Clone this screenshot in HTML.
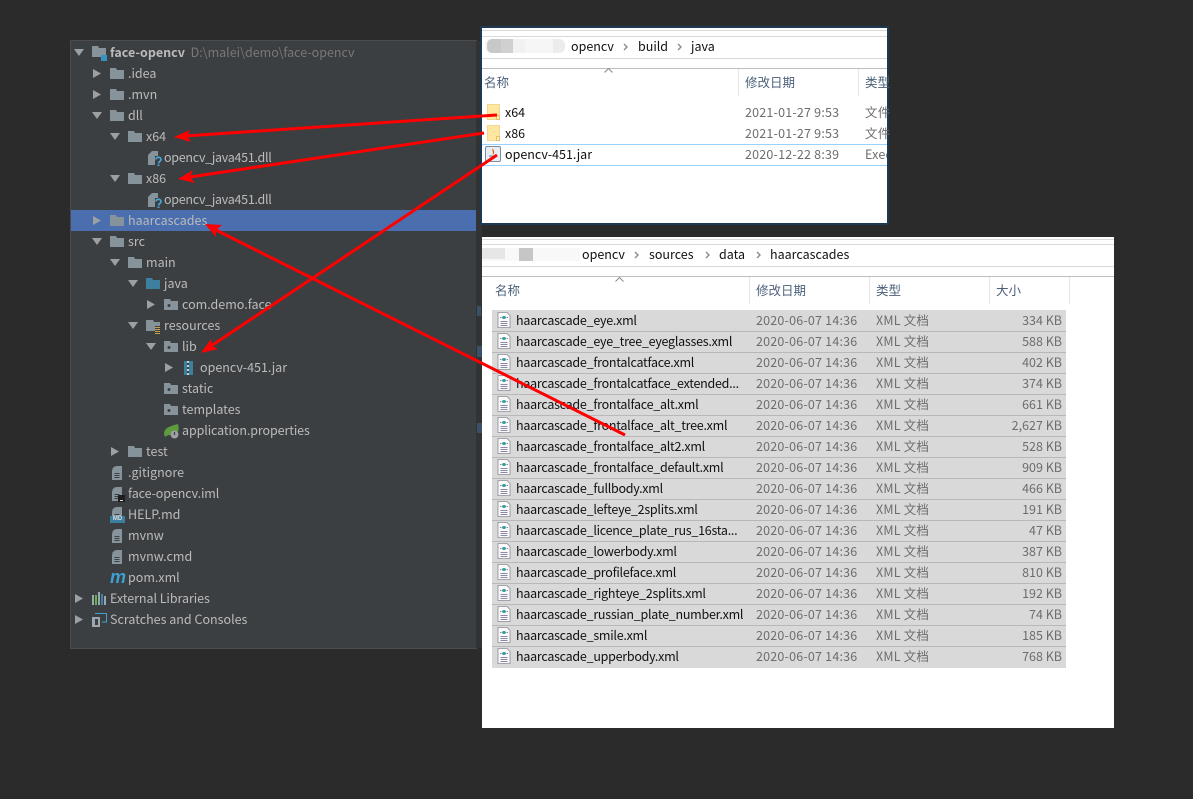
<!DOCTYPE html>
<html><head><meta charset="utf-8"><style>
html,body{margin:0;padding:0;background:#2b2b2b}
#p{position:relative;width:1193px;height:799px;overflow:hidden;background:#2b2b2b;font-family:"Noto Sans CJK SC","Liberation Sans",sans-serif}
#p div,#p svg.i{position:absolute}
.r,.e,.g,.h{margin-top:-1px}
.r{line-height:19px;height:21px;font-size:12.5px;color:#bbbbbb;white-space:nowrap}
.u{letter-spacing:-.28px}
.e{line-height:19px;height:21px;font-size:12.5px;color:#111;white-space:nowrap}
.n{letter-spacing:-.26px}
.g{line-height:19px;height:21px;font-size:12.5px;color:#6d6d6d;white-space:nowrap;letter-spacing:.2px}
.g[style*="right"]{letter-spacing:0}
.h{line-height:19px;height:21px;font-size:12.5px;color:#4c607a;white-space:nowrap}
.v{width:1px;background:#e5e5e5}
.l{height:1px;background:#d9d9d9}
.row{left:492px;width:574px;height:20px;background:#d9d9d9;border-top:1px solid #b8b8b8}
</style></head><body><div id="p">
<svg width="0" height="0" style="position:absolute">
<defs>
<symbol id="f" viewBox="0 0 14 11"><path d="M0 0H6L7 2H14V11H0Z" fill="#87939a"/></symbol>
<symbol id="b" viewBox="0 0 14 11"><path d="M0 0H6L7 2H14V11H0Z" fill="#3d7f9f"/></symbol>
<symbol id="k" viewBox="0 0 14 11"><path d="M0 0H6L7 2H14V11H0Z" fill="#87939a"/><circle cx="5" cy="6.500" r="1.500" fill="#3c3f41"/></symbol>
<symbol id="R" viewBox="0 0 14 14"><path d="M0 0H7L8 2H14V11H0Z" fill="#87939a"/><path d="M9 6H15V14H9Z" fill="#3c3f41"/><path d="M9 7h5v1H9zM9 9h5v1H9zM9 11h5v1H9zM9 13h5v1H9z" fill="#c9a24e"/></symbol>
<symbol id="d" viewBox="0 0 10 14"><path d="M4 0H10V14H0V4Z" fill="#87939a"/><path d="M3 0V3H0Z" fill="#87939a"/><path d="M2.500 7h5v1h-5zM2.500 9h5v1h-5zM2.500 11h5v1h-5z" fill="#3c3f41"/></symbol>
<symbol id="q" viewBox="0 0 14 15"><path d="M4 0H10V14H0V4Z" fill="#87939a"/><path d="M7 5H14V15H7Z" fill="#3c3f41"/><path d="M8 8.500C8 5.500 13 5.500 13 8.500C13 10.500 10.500 10.500 10.500 12.500" fill="none" stroke="#46a8d8" stroke-width="1.700"/><rect x="9.500" y="13.500" width="2" height="1.500" fill="#46a8d8"/></symbol>
<symbol id="x" viewBox="0 0 14 16"><path d="M1 .5H10L13 3.500V15.500H1Z" fill="#fafafa" stroke="#8c8c96" stroke-width=".8"/><path d="M3.500 9.500h7M3.500 11.500h7M3.500 13.500h7" stroke="#8a8aa8" stroke-width=".9"/><ellipse cx="7" cy="5.500" rx="1.900" ry="1.500" fill="#2f9a9f"/><path d="M4.300 5.500L3.200 5.500M9.700 5.500L10.800 5.500" stroke="#666" stroke-width=".9"/></symbol>
<symbol id="y" viewBox="0 0 13 16"><path d="M.5 .5H12.500V15.500H.5Z" fill="#ffe79f" stroke="#edcf7e" stroke-width=".8"/><path d="M9.500 11.500H12.500V15.500H9.500Z" fill="#ffeeb5" stroke="#dcb95a" stroke-width=".8"/></symbol>
<symbol id="c" viewBox="0 0 5 8"><path d="M1 1L4 4L1 7" fill="none" stroke="#8a8a8a" stroke-width="1.400"/></symbol>
</defs></svg>

<!-- IDE panel -->
<div style="left:70px;top:40px;width:407px;height:609px;background:#4a4c4e"></div>
<div style="left:71px;top:41px;width:405px;height:607px;background:#3c3f41"></div>
<div style="left:476px;top:41px;width:6px;height:607px;background:#313335"></div>
<div style="left:477px;top:306px;width:4px;height:10px;background:#3a5068"></div>
<div style="left:477px;top:346px;width:5px;height:11px;background:#3a5068"></div>
<div style="left:477px;top:423px;width:5px;height:10px;background:#3a5068"></div>
<div style="left:71px;top:210px;width:405px;height:21px;background:#4b6eaf"></div>

<!-- triangles -->
<svg style="position:absolute;left:0;top:0" width="480" height="650"><g fill="#9da0a2">
<path d="M74 49H84L79 56Z"/><path d="M93 69V78L101 73.500Z"/><path d="M93 90V99L101 94.500Z"/>
<path d="M92 112H102L97 119Z"/><path d="M110 133H120L115 140Z"/><path d="M110 175H120L115 182Z"/>
<path d="M93 216V225L101 220.500Z"/><path d="M92 238H102L97 245Z"/><path d="M110 259H120L115 266Z"/>
<path d="M128 280H138L133 287Z"/><path d="M147 300V309L155 304.500Z"/><path d="M128 322H138L133 329Z"/>
<path d="M146 343H156L151 350Z"/><path d="M165 363V372L173 367.500Z"/><path d="M111 447V456L119 451.500Z"/>
<path d="M75 594V603L83 598.500Z"/><path d="M75 615V624L83 619.500Z"/></g></svg>

<!-- tree icons -->
<svg class="i" style="left:92px;top:46px" width="14" height="11"><use href="#f"/></svg>
<div style="left:101px;top:55px;width:6px;height:6px;background:#3592c4"></div>
<svg class="i" style="left:110px;top:68px" width="14" height="11"><use href="#f"/></svg>
<svg class="i" style="left:110px;top:89px" width="14" height="11"><use href="#f"/></svg>
<svg class="i" style="left:110px;top:110px" width="14" height="11"><use href="#f"/></svg>
<svg class="i" style="left:128px;top:131px" width="14" height="11"><use href="#f"/></svg>
<svg class="i" style="left:148px;top:151px" width="14" height="15"><use href="#q"/></svg>
<svg class="i" style="left:128px;top:173px" width="14" height="11"><use href="#f"/></svg>
<svg class="i" style="left:148px;top:193px" width="14" height="15"><use href="#q"/></svg>
<svg class="i" style="left:110px;top:215px" width="14" height="11"><use href="#f"/></svg>
<svg class="i" style="left:110px;top:236px" width="14" height="11"><use href="#f"/></svg>
<svg class="i" style="left:128px;top:257px" width="14" height="11"><use href="#f"/></svg>
<svg class="i" style="left:146px;top:278px" width="14" height="11"><use href="#b"/></svg>
<svg class="i" style="left:164px;top:299px" width="14" height="11"><use href="#k"/></svg>
<svg class="i" style="left:146px;top:320px" width="14" height="14"><use href="#R"/></svg>
<svg class="i" style="left:164px;top:341px" width="14" height="11"><use href="#k"/></svg>
<div style="left:184px;top:361px;width:3px;height:14px;background:#3d7f9f"></div>
<div style="left:187px;top:361px;width:2px;height:14px;background:repeating-linear-gradient(#ccc 0 2px,#3c3f41 2px 4px)"></div>
<div style="left:189px;top:361px;width:4px;height:14px;background:#3d7f9f"></div>
<svg class="i" style="left:164px;top:383px" width="14" height="11"><use href="#k"/></svg>
<svg class="i" style="left:164px;top:404px" width="14" height="11"><use href="#k"/></svg>
<svg class="i" style="left:164px;top:424px" width="16" height="15" viewBox="0 0 16 15"><path d="M0 10C0 4 6 2 14 0C15 4 15 7 13 9C9 10 3 11 1 13Z" fill="#5d9b3f"/><circle cx="10.500" cy="10.500" r="4" fill="#9da0a2"/><path d="M10.500 8V11" stroke="#3c3f41" stroke-width="1.200"/></svg>
<svg class="i" style="left:128px;top:446px" width="14" height="11"><use href="#f"/></svg>
<svg class="i" style="left:112px;top:466px" width="10" height="14"><use href="#d"/></svg>
<svg class="i" style="left:112px;top:487px" width="10" height="14"><use href="#d"/></svg>
<div style="left:118px;top:495px;width:7px;height:7px;background:#1e1e1e"></div>
<div style="left:120px;top:500px;width:3px;height:1px;background:#ddd"></div>
<svg class="i" style="left:112px;top:507px" width="10" height="14"><use href="#d"/></svg>
<div style="left:110px;top:516px;width:15px;height:7px;background:#3d7f9f;color:#ddd;font:bold 6px/7px 'Liberation Sans',sans-serif;text-align:center">MD</div>
<svg class="i" style="left:112px;top:529px" width="10" height="14"><use href="#d"/></svg>
<svg class="i" style="left:112px;top:550px" width="10" height="14"><use href="#d"/></svg>
<div style="left:110px;top:568px;color:#3d9fd0;font:italic bold 18px/18px 'Liberation Sans',sans-serif">m</div>
<svg class="i" style="left:92px;top:592px" width="14" height="13" viewBox="0 0 14 13"><path d="M0 3h2v10H0z" fill="#9aa7b0"/><path d="M3 3h2v10H3z" fill="#62b543"/><path d="M6 0h2v13H6z" fill="#9aa7b0"/><path d="M9 2h2v11H9z" fill="#40a0d0" opacity=".7"/><path d="M12 4h2v9h-2z" fill="#9aa7b0"/></svg>
<svg class="i" style="left:92px;top:613px" width="15" height="14" viewBox="0 0 15 14"><path d="M3 .5H14.500V9H10" fill="none" stroke="#40a0d0"/><path d="M0 4H8V14H0Z" fill="#9aa7b0"/><path d="M3 6h3v6H3z" fill="#3c3f41"/></svg>

<!-- tree text -->
<div class="r" style="left:110px;top:43px"><b style="color:#bbb">face-opencv</b> <span style="color:#787878">&nbsp;D:\malei\demo\face-opencv</span></div>
<div class="r" style="left:128px;top:64px">.idea</div>
<div class="r" style="left:128px;top:85px">.mvn</div>
<div class="r" style="left:128px;top:106px">dll</div>
<div class="r" style="left:146px;top:127px">x64</div>
<div class="r u" style="left:164px;top:148px">opencv_java451.dll</div>
<div class="r" style="left:146px;top:169px">x86</div>
<div class="r u" style="left:164px;top:190px">opencv_java451.dll</div>
<div class="r" style="left:128px;top:211px">haarcascades</div>
<div class="r" style="left:128px;top:232px">src</div>
<div class="r" style="left:146px;top:253px">main</div>
<div class="r" style="left:164px;top:274px">java</div>
<div class="r" style="left:182px;top:295px">com.demo.face</div>
<div class="r" style="left:164px;top:316px">resources</div>
<div class="r" style="left:182px;top:337px">lib</div>
<div class="r" style="left:200px;top:358px">opencv-451.jar</div>
<div class="r" style="left:182px;top:379px">static</div>
<div class="r" style="left:182px;top:400px">templates</div>
<div class="r" style="left:182px;top:421px;letter-spacing:-.1px">application.properties</div>
<div class="r" style="left:146px;top:442px">test</div>
<div class="r" style="left:128px;top:463px">.gitignore</div>
<div class="r" style="left:128px;top:484px;letter-spacing:-.1px">face-opencv.iml</div>
<div class="r" style="left:128px;top:505px">HELP.md</div>
<div class="r" style="left:128px;top:526px">mvnw</div>
<div class="r" style="left:128px;top:547px">mvnw.cmd</div>
<div class="r" style="left:128px;top:568px">pom.xml</div>
<div class="r" style="left:110px;top:589px;letter-spacing:-.05px">External Libraries</div>
<div class="r" style="left:110px;top:610px">Scratches and Consoles</div>

<!-- window 1 -->
<div style="left:480px;top:26px;width:409px;height:199px;background:#1d3a52"></div>
<div style="left:482px;top:28px;width:405px;height:195px;background:#fff"></div>
<div class="l" style="left:482px;top:30px;width:405px"></div>
<div class="l" style="left:482px;top:36px;width:405px"></div>
<div class="l" style="left:482px;top:58px;width:405px"></div>
<div style="left:482px;top:68px;width:405px;height:1px;background:#bdbdbd"></div>
<div style="left:485px;top:39px;width:80px;height:14px;background:#f6f6f6;border-radius:6px"></div>
<div style="left:487px;top:39px;width:14px;height:14px;background:#c8c8c8;border-radius:5px 0 0 5px"></div>
<div style="left:501px;top:39px;width:12px;height:14px;background:#d0d0d0"></div>
<div style="left:513px;top:39px;width:12px;height:14px;background:#f1f1f1"></div>
<div style="left:553px;top:39px;width:12px;height:14px;background:#ececec;border-radius:0 6px 6px 0"></div>
<div class="e" style="left:571px;top:37px">opencv</div>
<svg class="i" style="left:623px;top:43px" width="5" height="8"><use href="#c"/></svg>
<div class="e" style="left:638px;top:37px">build</div>
<svg class="i" style="left:677px;top:43px" width="5" height="8"><use href="#c"/></svg>
<div class="e" style="left:691px;top:37px">java</div>
<svg class="i" style="left:604px;top:68px" width="9" height="5"><path d="M.5 4.500L4.500 .5L8.500 4.500" fill="none" stroke="#8a8a8a"/></svg>
<div class="h" style="left:484px;top:73px">名称</div>
<div class="h" style="left:745px;top:73px">修改日期</div>
<div class="h" style="left:865px;top:73px">类型</div>
<div class="v" style="left:738px;top:69px;height:27px"></div>
<div class="v" style="left:858px;top:69px;height:27px"></div>
<svg class="i" style="left:487px;top:104px" width="13" height="16"><use href="#y"/></svg>
<svg class="i" style="left:487px;top:125px" width="13" height="16"><use href="#y"/></svg>
<div style="left:482px;top:144px;width:405px;height:20px;border-top:1px solid #99d1ff;border-bottom:1px solid #99d1ff"></div>
<svg class="i" style="left:485px;top:146px" width="16" height="16" viewBox="0 0 16 16"><rect x=".5" y=".5" width="15" height="15" rx="1.500" fill="#e9edf2" stroke="#7d8ca0"/><path d="M8 3C7 5 10 5 8 8" stroke="#d9631e" fill="none" stroke-width="1.200"/><path d="M4 10H11M5 12H10" stroke="#5382a1"/></svg>
<div class="e" style="left:505px;top:103px">x64</div>
<div class="e" style="left:505px;top:124px">x86</div>
<div class="e" style="left:505px;top:145px">opencv-451.jar</div>
<div class="g" style="left:745px;top:103px">2021-01-27 9:53</div>
<div class="g" style="left:745px;top:124px">2021-01-27 9:53</div>
<div class="g" style="left:745px;top:145px">2020-12-22 8:39</div>
<div class="g" style="left:865px;top:103px">文件</div>
<div class="g" style="left:865px;top:124px">文件</div>
<div class="g" style="left:865px;top:145px;width:22px;overflow:hidden">Executable</div>

<!-- window 2 -->
<div style="left:482px;top:237px;width:632px;height:491px;background:#fff"></div>
<div class="l" style="left:482px;top:239px;width:632px"></div>
<div class="l" style="left:482px;top:244px;width:632px"></div>
<div class="l" style="left:482px;top:266px;width:632px"></div>
<div style="left:482px;top:276px;width:632px;height:1px;background:#bdbdbd"></div>
<div style="left:482px;top:248px;width:98px;height:13px;background:#f8f8f8"></div>
<div style="left:482px;top:248px;width:23px;height:11px;background:#e6e6e6"></div>
<div style="left:519px;top:248px;width:14px;height:13px;background:#c6c6c6"></div>
<div class="e" style="left:582px;top:245px">opencv</div>
<svg class="i" style="left:634px;top:251px" width="5" height="8"><use href="#c"/></svg>
<div class="e" style="left:649px;top:245px">sources</div>
<svg class="i" style="left:705px;top:251px" width="5" height="8"><use href="#c"/></svg>
<div class="e" style="left:719px;top:245px">data</div>
<svg class="i" style="left:756px;top:251px" width="5" height="8"><use href="#c"/></svg>
<div class="e" style="left:770px;top:245px">haarcascades</div>
<svg class="i" style="left:615px;top:277px" width="9" height="5"><path d="M.5 4.500L4.500 .5L8.500 4.500" fill="none" stroke="#8a8a8a"/></svg>
<div class="h" style="left:495px;top:281px">名称</div>
<div class="h" style="left:756px;top:281px">修改日期</div>
<div class="h" style="left:876px;top:281px">类型</div>
<div class="h" style="left:996px;top:281px">大小</div>
<div class="v" style="left:749px;top:277px;height:27px"></div>
<div class="v" style="left:869px;top:277px;height:27px"></div>
<div class="v" style="left:989px;top:277px;height:27px"></div>
<div class="v" style="left:1069px;top:277px;height:27px"></div>

<div class="row" style="top:310px;border-top-color:#d9d9d9"></div><div class="row" style="top:331px"></div><div class="row" style="top:352px"></div><div class="row" style="top:373px"></div><div class="row" style="top:394px"></div><div class="row" style="top:415px"></div><div class="row" style="top:436px"></div><div class="row" style="top:457px"></div><div class="row" style="top:478px"></div><div class="row" style="top:499px"></div><div class="row" style="top:520px"></div><div class="row" style="top:541px"></div><div class="row" style="top:562px"></div><div class="row" style="top:583px"></div><div class="row" style="top:604px"></div><div class="row" style="top:625px"></div><div class="row" style="top:646px;height:21px"></div>

<svg class="i" style="left:497px;top:312px" width="14" height="16"><use href="#x"/></svg><svg class="i" style="left:497px;top:333px" width="14" height="16"><use href="#x"/></svg><svg class="i" style="left:497px;top:354px" width="14" height="16"><use href="#x"/></svg><svg class="i" style="left:497px;top:375px" width="14" height="16"><use href="#x"/></svg><svg class="i" style="left:497px;top:396px" width="14" height="16"><use href="#x"/></svg><svg class="i" style="left:497px;top:417px" width="14" height="16"><use href="#x"/></svg><svg class="i" style="left:497px;top:438px" width="14" height="16"><use href="#x"/></svg><svg class="i" style="left:497px;top:459px" width="14" height="16"><use href="#x"/></svg><svg class="i" style="left:497px;top:480px" width="14" height="16"><use href="#x"/></svg><svg class="i" style="left:497px;top:501px" width="14" height="16"><use href="#x"/></svg><svg class="i" style="left:497px;top:522px" width="14" height="16"><use href="#x"/></svg><svg class="i" style="left:497px;top:543px" width="14" height="16"><use href="#x"/></svg><svg class="i" style="left:497px;top:564px" width="14" height="16"><use href="#x"/></svg><svg class="i" style="left:497px;top:585px" width="14" height="16"><use href="#x"/></svg><svg class="i" style="left:497px;top:606px" width="14" height="16"><use href="#x"/></svg><svg class="i" style="left:497px;top:627px" width="14" height="16"><use href="#x"/></svg><svg class="i" style="left:497px;top:648px" width="14" height="16"><use href="#x"/></svg>

<div class="e n" style="left:516px;top:311px">haarcascade_eye.xml</div>
<div class="e n" style="left:516px;top:332px">haarcascade_eye_tree_eyeglasses.xml</div>
<div class="e n" style="left:516px;top:353px">haarcascade_frontalcatface.xml</div>
<div class="e n" style="left:516px;top:374px">haarcascade_frontalcatface_extended...</div>
<div class="e n" style="left:516px;top:395px">haarcascade_frontalface_alt.xml</div>
<div class="e n" style="left:516px;top:416px">haarcascade_frontalface_alt_tree.xml</div>
<div class="e n" style="left:516px;top:437px">haarcascade_frontalface_alt2.xml</div>
<div class="e n" style="left:516px;top:458px">haarcascade_frontalface_default.xml</div>
<div class="e n" style="left:516px;top:479px">haarcascade_fullbody.xml</div>
<div class="e n" style="left:516px;top:500px">haarcascade_lefteye_2splits.xml</div>
<div class="e n" style="left:516px;top:521px">haarcascade_licence_plate_rus_16sta...</div>
<div class="e n" style="left:516px;top:542px">haarcascade_lowerbody.xml</div>
<div class="e n" style="left:516px;top:563px">haarcascade_profileface.xml</div>
<div class="e n" style="left:516px;top:584px">haarcascade_righteye_2splits.xml</div>
<div class="e n" style="left:516px;top:605px">haarcascade_russian_plate_number.xml</div>
<div class="e n" style="left:516px;top:626px">haarcascade_smile.xml</div>
<div class="e n" style="left:516px;top:647px">haarcascade_upperbody.xml</div>

<div class="g" style="left:756px;top:311px">2020-06-07 14:36</div><div class="g" style="left:876px;top:311px">XML 文档</div><div class="g" style="right:131px;top:311px">334 KB</div>
<div class="g" style="left:756px;top:332px">2020-06-07 14:36</div><div class="g" style="left:876px;top:332px">XML 文档</div><div class="g" style="right:131px;top:332px">588 KB</div>
<div class="g" style="left:756px;top:353px">2020-06-07 14:36</div><div class="g" style="left:876px;top:353px">XML 文档</div><div class="g" style="right:131px;top:353px">402 KB</div>
<div class="g" style="left:756px;top:374px">2020-06-07 14:36</div><div class="g" style="left:876px;top:374px">XML 文档</div><div class="g" style="right:131px;top:374px">374 KB</div>
<div class="g" style="left:756px;top:395px">2020-06-07 14:36</div><div class="g" style="left:876px;top:395px">XML 文档</div><div class="g" style="right:131px;top:395px">661 KB</div>
<div class="g" style="left:756px;top:416px">2020-06-07 14:36</div><div class="g" style="left:876px;top:416px">XML 文档</div><div class="g" style="right:131px;top:416px">2,627 KB</div>
<div class="g" style="left:756px;top:437px">2020-06-07 14:36</div><div class="g" style="left:876px;top:437px">XML 文档</div><div class="g" style="right:131px;top:437px">528 KB</div>
<div class="g" style="left:756px;top:458px">2020-06-07 14:36</div><div class="g" style="left:876px;top:458px">XML 文档</div><div class="g" style="right:131px;top:458px">909 KB</div>
<div class="g" style="left:756px;top:479px">2020-06-07 14:36</div><div class="g" style="left:876px;top:479px">XML 文档</div><div class="g" style="right:131px;top:479px">466 KB</div>
<div class="g" style="left:756px;top:500px">2020-06-07 14:36</div><div class="g" style="left:876px;top:500px">XML 文档</div><div class="g" style="right:131px;top:500px">191 KB</div>
<div class="g" style="left:756px;top:521px">2020-06-07 14:36</div><div class="g" style="left:876px;top:521px">XML 文档</div><div class="g" style="right:131px;top:521px">47 KB</div>
<div class="g" style="left:756px;top:542px">2020-06-07 14:36</div><div class="g" style="left:876px;top:542px">XML 文档</div><div class="g" style="right:131px;top:542px">387 KB</div>
<div class="g" style="left:756px;top:563px">2020-06-07 14:36</div><div class="g" style="left:876px;top:563px">XML 文档</div><div class="g" style="right:131px;top:563px">810 KB</div>
<div class="g" style="left:756px;top:584px">2020-06-07 14:36</div><div class="g" style="left:876px;top:584px">XML 文档</div><div class="g" style="right:131px;top:584px">192 KB</div>
<div class="g" style="left:756px;top:605px">2020-06-07 14:36</div><div class="g" style="left:876px;top:605px">XML 文档</div><div class="g" style="right:131px;top:605px">74 KB</div>
<div class="g" style="left:756px;top:626px">2020-06-07 14:36</div><div class="g" style="left:876px;top:626px">XML 文档</div><div class="g" style="right:131px;top:626px">185 KB</div>
<div class="g" style="left:756px;top:647px">2020-06-07 14:36</div><div class="g" style="left:876px;top:647px">XML 文档</div><div class="g" style="right:131px;top:647px">768 KB</div>

<!-- arrows -->
<svg style="position:absolute;left:0;top:0" width="1193" height="799">
<g stroke="#ff0000" stroke-width="3" fill="none">
<path d="M497 115L185 136"/>
<path d="M484 133L190 177"/>
<path d="M497 155L211 346"/>
<path d="M625 435L216 230"/>
</g>
<g fill="#ff0000">
<path d="M174 137L190 130L187 136L191 142Z"/>
<path d="M178 179L193 170L190 177L195 183Z"/>
<path d="M201 353L211 339L212 346L218 349Z"/>
<path d="M205 224L222 225L216 230L216 237Z"/>
</g></svg>
</div></body></html>
